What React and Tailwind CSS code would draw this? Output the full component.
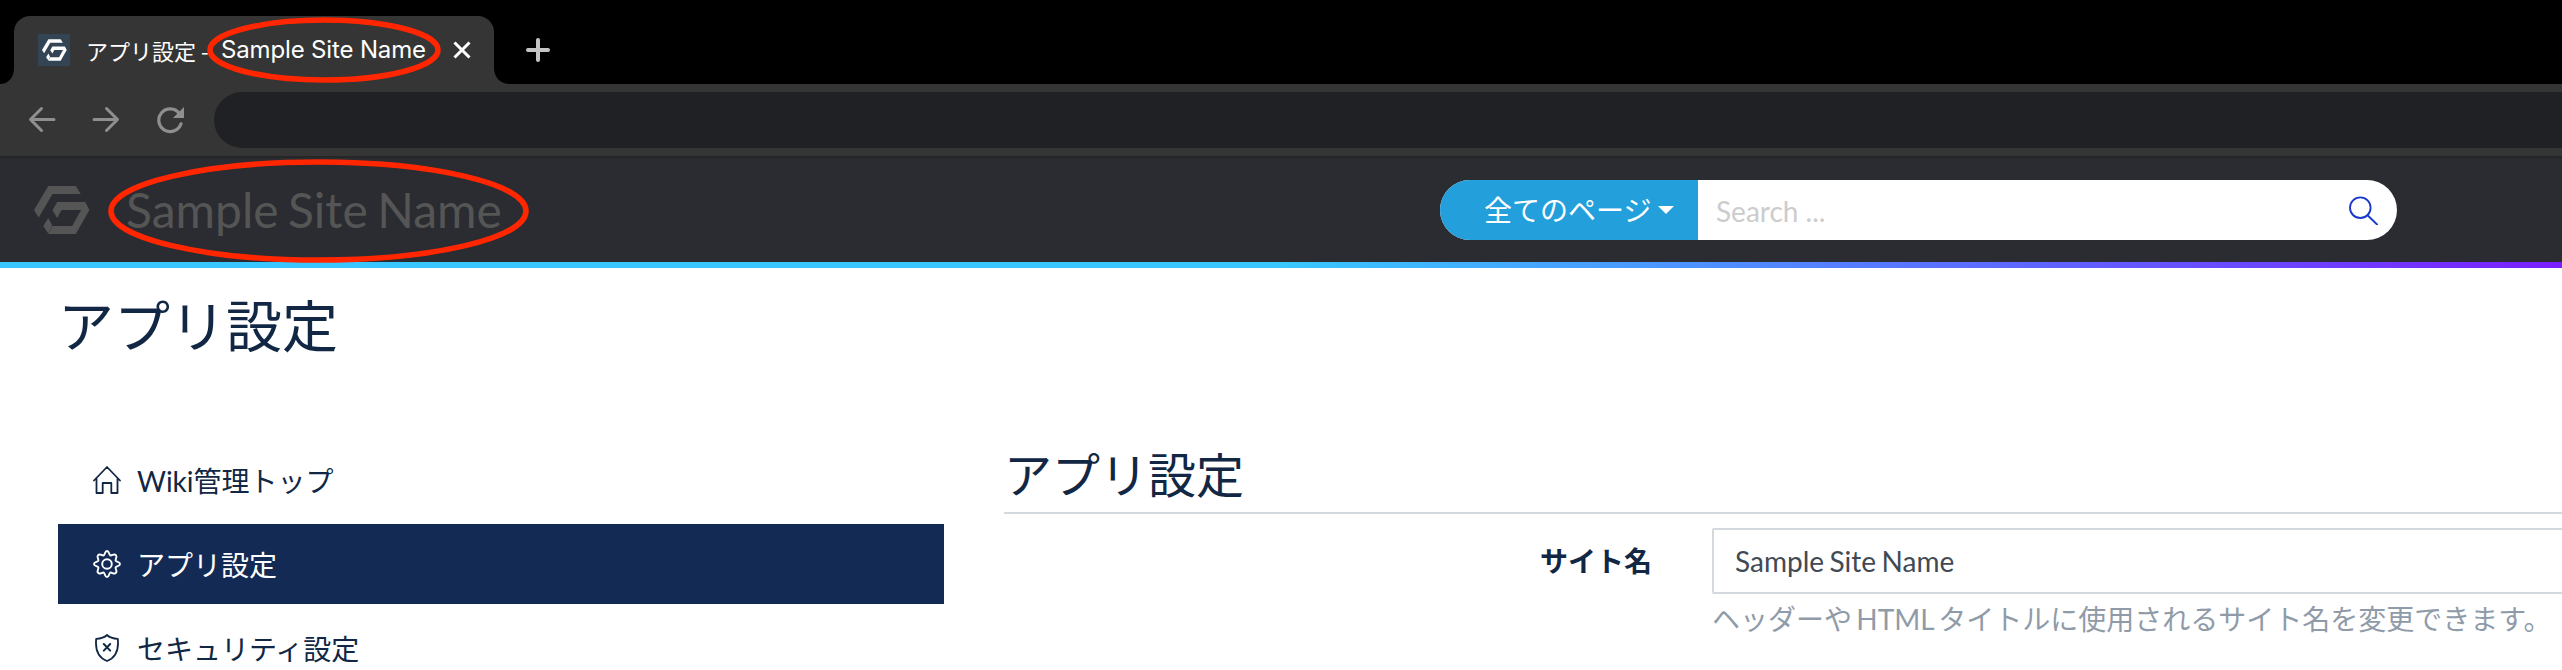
const RED = "#ff2600";

function Mark({ className }) {
  return (
    <svg className={className} viewBox="0 0 56 48" fill="currentColor">
      <path d="M14.3 0H41.8L46.7 8H18.5L4.7 31.4L0 24Z" />
      <path d="M23.2 16H51.3L55.4 24L41.8 48H14.3L18.5 40H38.2L47.1 24H27.5L23.2 32L18.5 24.3Z" />
      <path d="M14.3 32L18.3 39.6L14.3 47.6L9.3 40Z" />
    </svg>
  );
}

function Ring({ width, height, className }) {
  return (
    <svg className={className} width={width} height={height} viewBox={`0 0 ${width} ${height}`}>
      <ellipse
        cx={width / 2}
        cy={height / 2}
        rx={width / 2 - 3}
        ry={height / 2 - 3}
        fill="none"
        stroke={RED}
        strokeWidth="5.6"
      />
    </svg>
  );
}

function TabStrip() {
  return (
    <div className="flex h-[84px] items-end bg-black">
      <svg className="h-4 w-[14px] shrink-0" viewBox="0 0 14 16" preserveAspectRatio="none">
        <path d="M14 0V16H0C8 16 14 10 14 0Z" fill="#353535" />
      </svg>
      <div className="flex h-[68px] w-[480px] shrink-0 items-center rounded-t-2xl bg-[#353535] pl-6">
        <span className="flex size-8 shrink-0 items-center justify-center bg-[#334455] text-white">
          <Mark className="h-[22px] w-[25px]" />
        </span>
        <div className="ml-4 flex w-[367px] items-center text-[22px] leading-8 whitespace-pre text-white">
          <span className="w-[118px] font-['Noto_Sans_CJK_JP',sans-serif]">アプリ設定 -</span>
          <span className="relative ml-[17px] font-[Inter,sans-serif] text-[24px] tracking-[-0.15px]">
            Sample Site Name
            <Ring width={234} height={66} className="absolute -top-[17px] -left-[14px] max-w-none" />
          </span>
        </div>
        <svg className="size-[18px] shrink-0" viewBox="0 0 18 18" stroke="#fff" strokeWidth="3">
          <path d="M1.5 1.5L16.5 16.5M16.5 1.5L1.5 16.5" />
        </svg>
      </div>
      <svg className="h-16 w-4 shrink-0" viewBox="0 0 16 64">
        <path d="M0 48V64H16C6 64 0 57 0 48Z" fill="#353535" />
      </svg>
      <svg className="mb-[22px] ml-4 size-6" viewBox="0 0 24 24" stroke="#c4c4c4" strokeWidth="4" strokeLinecap="round">
        <path d="M12 2V22M2 12H22" />
      </svg>
    </div>
  );
}

function Toolbar() {
  return (
    <div className="flex h-[74px] items-center border-b-2 border-[#242628] bg-[#353535] pl-7 text-[#8f8f8f]">
      <svg className="h-7 w-7" viewBox="0 0 28 28" fill="none" stroke="currentColor" strokeWidth="3" strokeLinecap="round" strokeLinejoin="round">
        <path d="M26 13.5H3M13.5 2.5L2.5 13.5L13.5 24.5" />
      </svg>
      <svg className="ml-9 h-7 w-7" viewBox="0 0 28 28" fill="none" stroke="currentColor" strokeWidth="3" strokeLinecap="round" strokeLinejoin="round">
        <path d="M2 13.5H25M14.5 2.5L25.5 13.5L14.5 24.5" />
      </svg>
      <svg className="ml-9 h-7 w-7" viewBox="0 0 28 28" fill="none">
        <path d="M23.2 7.2A11.4 11.4 0 1 0 25 17.8" stroke="currentColor" strokeWidth="3.2" strokeLinecap="round" />
        <path d="M28 1V12H17Z" fill="currentColor" />
      </svg>
      <div className="ml-[30px] h-14 flex-1 rounded-l-full bg-[#202124]" />
    </div>
  );
}

function AppBar() {
  return (
    <header className="flex h-[104px] items-center bg-[#2a2c31]">
      <div className="ml-[34px] flex w-[1406px] items-center text-[#545554]">
        <Mark className="h-12 w-14" />
        <span className="relative ml-9 text-[48px] leading-[60px] [word-spacing:-0.06em] whitespace-nowrap">
          Sample Site Name
          <Ring width={421} height={104} className="absolute -top-[21px] -left-[18px] max-w-none" />
        </span>
      </div>
      <div className="flex h-[60px] w-[957px] overflow-hidden rounded-full bg-white">
        <button className="flex w-[258px] items-center bg-[#239fdb] pl-[44px] text-[28px] leading-9 whitespace-nowrap text-white">
          全てのページ
          <svg className="ml-[7px] h-2 w-4" viewBox="0 0 16 8" fill="currentColor">
            <path d="M0 0H16L8 8Z" />
          </svg>
        </button>
        <div className="flex flex-1 items-center justify-between pr-[18px] pl-[18px]">
          <span className="pt-0.5 text-[28px] leading-9 text-[#cccccc]">Search ...</span>
          <svg className="h-[30px] w-[30px]" viewBox="0 0 30 30" fill="none" stroke="#1c3ac8" strokeWidth="1.9">
            <circle cx="11.3" cy="12.7" r="10.3" />
            <path d="M18.5 20.2L28.6 30" />
          </svg>
        </div>
      </div>
    </header>
  );
}

function HomeIcon() {
  return (
    <svg className="size-7 shrink-0" viewBox="0 0 28 28" fill="none" stroke="currentColor" strokeWidth="1.8" strokeLinejoin="round" strokeLinecap="round">
      <path d="M1 14.5L14 1L27 14.5M3.5 12.5V27H9.7V17H18.3V27H24.5V12.5" />
    </svg>
  );
}

function GearIcon() {
  return (
    <svg className="size-7 shrink-0" viewBox="0 0 28 28" fill="none" stroke="currentColor" strokeWidth="1.9" strokeLinejoin="round">
      <circle cx="14" cy="14" r="4.8" />
      <path d="M14 1C16.4 1 15.7 4.6 17.3 5.4C18.9 6 21 3.2 22.9 5.1C24.8 7 22 9.1 22.6 10.7C23.4 12.3 27 11.6 27 14C27 16.4 23.4 15.7 22.6 17.3C22 18.9 24.8 21 22.9 22.9C21 24.8 18.9 22 17.3 22.6C15.7 23.4 16.4 27 14 27C11.6 27 12.3 23.4 10.7 22.6C9.1 22 7 24.8 5.1 22.9C3.2 21 6 18.9 5.4 17.3C4.6 15.7 1 16.4 1 14C1 11.6 4.6 12.3 5.4 10.7C6 9.1 3.2 7 5.1 5.1C7 3.2 9.1 6 10.7 5.4C12.3 4.6 11.6 1 14 1Z" />
    </svg>
  );
}

function ShieldIcon() {
  return (
    <svg className="size-7 shrink-0" viewBox="0 0 28 28" fill="none" stroke="currentColor" strokeWidth="1.8" strokeLinejoin="round" strokeLinecap="round">
      <path d="M14 1C11.5 3.4 7.5 4.6 3.2 4.8C2.2 14.5 4.5 23.5 14 27C23.5 23.5 25.8 14.5 24.8 4.8C20.5 4.6 16.5 3.4 14 1Z" />
      <path d="M10.8 10L17.2 16.6M17.2 10L10.8 16.6" strokeWidth="2" />
    </svg>
  );
}

const MENU = [
  { label: "Wiki管理トップ", Icon: HomeIcon },
  { label: "アプリ設定", Icon: GearIcon, active: true },
  { label: "セキュリティ設定", Icon: ShieldIcon },
];

function SideMenu() {
  return (
    <nav className="flex w-[886px] shrink-0 flex-col gap-1">
      {MENU.map(({ label, Icon, active }) => (
        <a
          key={label}
          className={
            active
              ? "flex h-20 items-center gap-4 bg-[#132b54] pl-[35px] text-[28px] leading-9 text-white"
              : "flex h-20 items-center gap-4 pl-[35px] text-[28px] leading-9 text-[#112744]"
          }
        >
          <Icon />
          <span className="pt-0.5">{label}</span>
        </a>
      ))}
    </nav>
  );
}

export default function App() {
  return (
    <div className="h-[670px] w-[2562px] overflow-hidden bg-white font-[Lato,'Noto_Sans_CJK_JP',sans-serif] text-[#112744]">
      <TabStrip />
      <Toolbar />
      <AppBar />
      <div className="h-1.5 bg-[linear-gradient(90deg,#38c8ff_50%,#7a1fff_100%)]" />
      <main className="px-[58px] pt-6">
        <h1 className="text-[56px] leading-[67px]">アプリ設定</h1>
        <div className="mt-[81px] flex gap-[60px]">
          <SideMenu />
          <section className="w-[1600px] shrink-0">
            <h2 className="mt-1 h-[70px] border-b-2 border-[#d4d9df] pt-0.5 text-[48px] leading-[58px]">アプリ設定</h2>
            <div className="mt-[14px] flex">
              <div className="w-[648px] pt-[14px] text-right text-[28px] leading-[38px] font-bold">サイト名</div>
              <div className="ml-[60px] flex-1">
                <div className="flex h-[66px] items-center rounded-xs border-2 border-[#d4d9df] pl-[21px] text-[28px] leading-9 [word-spacing:-0.06em] text-[#414a54]">
                  Sample Site Name
                </div>
                <p className="mt-1.5 text-[28px] leading-[38px] [word-spacing:-0.1em] whitespace-nowrap text-[#8f9ba8]">
                  ヘッダーや HTML タイトルに使用されるサイト名を変更できます。
                </p>
              </div>
            </div>
          </section>
        </div>
      </main>
    </div>
  );
}
